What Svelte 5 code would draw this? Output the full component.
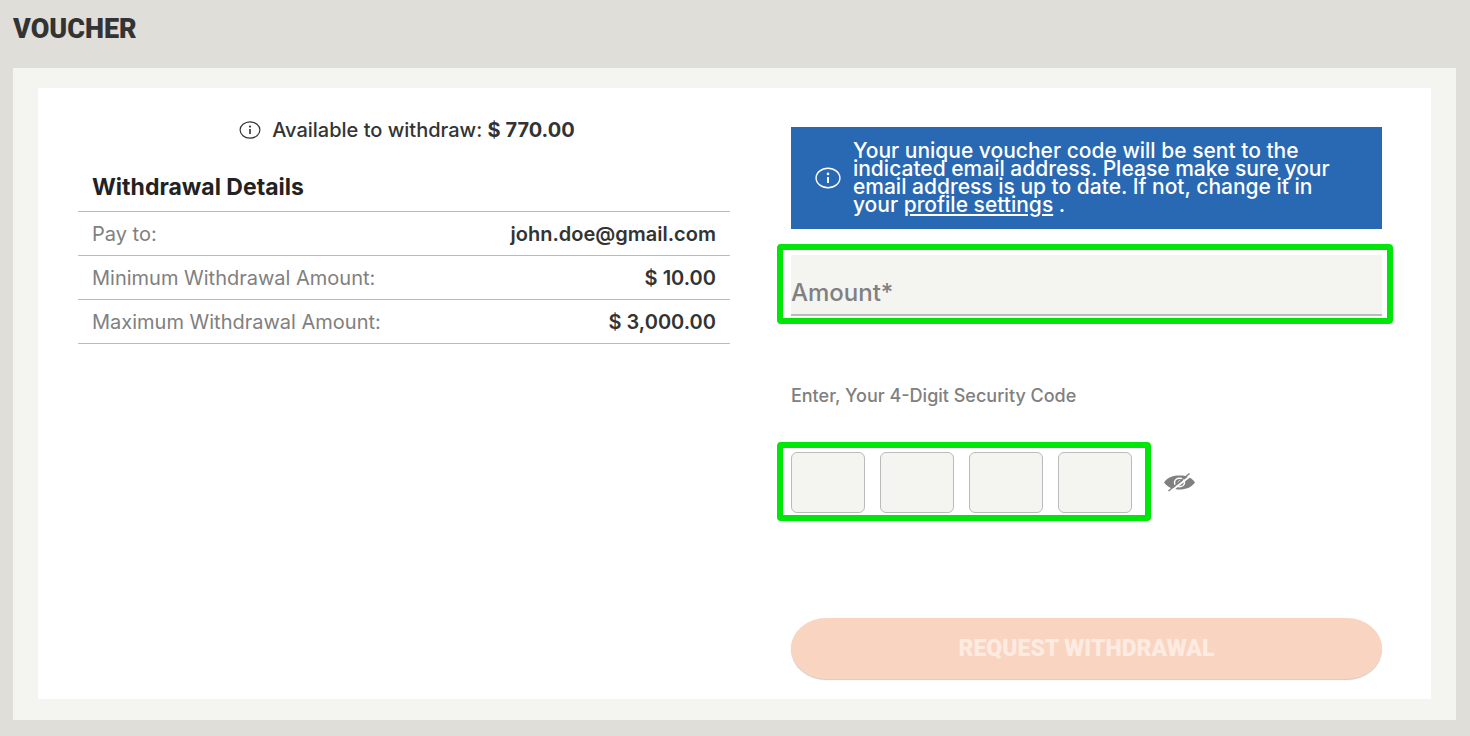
<script lang="ts">
  interface Detail {
    label: string
    value: string
  }

  const details: Detail[] = [
    { label: 'Pay to:', value: 'john.doe@gmail.com' },
    { label: 'Minimum Withdrawal Amount:', value: '$ 10.00' },
    { label: 'Maximum Withdrawal Amount:', value: '$ 3,000.00' },
  ]

  let amount = $state('')
  let code = $state(['', '', '', ''])
  let showCode = $state(false)

  function submit(event: SubmitEvent) {
    event.preventDefault()
  }
</script>

{#snippet infoIcon()}
  <svg class="info" viewBox="0 0 24 20" aria-hidden="true">
    <ellipse cx="12" cy="10" rx="11" ry="9" fill="none" stroke="currentColor" stroke-width="1.3" />
    <path d="M12 9v5.5" stroke="currentColor" stroke-width="1.8" />
    <circle cx="12" cy="6.2" r="1.2" fill="currentColor" />
  </svg>
{/snippet}

<main class="page">
  <h1>VOUCHER</h1>

  <div class="panel">
    <div class="card">
      <section class="summary">
        <p class="available">
          {@render infoIcon()}
          <span>Available to withdraw: <b>$ 770.00</b></span>
        </p>

        <h2>Withdrawal Details</h2>
        <table>
          <tbody>
            {#each details as detail}
              <tr>
                <th scope="row">{detail.label}</th>
                <td>{detail.value}</td>
              </tr>
            {/each}
          </tbody>
        </table>
      </section>

      <form onsubmit={submit}>
        <div class="notice">
          {@render infoIcon()}
          <p>
            Your unique voucher code will be sent to the indicated email address. Please make sure
            your email address is up to date. If not, change it in your
            <a href="#profile">profile settings</a> .
          </p>
        </div>

        <div class="highlight amount">
          <input id="amount" bind:value={amount} type="text" inputmode="decimal" required />
          {#if !amount}
            <label for="amount">Amount*</label>
          {/if}
        </div>

        <p class="code-label" id="code-label">Enter, Your 4-Digit Security Code</p>

        <div class="code-row">
          <div class="highlight code" role="group" aria-labelledby="code-label">
            {#each code as _, i}
              <input
                bind:value={code[i]}
                type={showCode ? 'text' : 'password'}
                maxlength="1"
                aria-label={`Digit ${i + 1}`}
              />
            {/each}
          </div>
          <button
            class="toggle"
            type="button"
            aria-label="Show security code"
            onclick={() => (showCode = !showCode)}
          >
            <svg viewBox="0 0 31 20" aria-hidden="true">
              <path d="M0 10.5C4 5 9 3.500 15.500 3.500S27 5 31 10.500C27 15.500 22 17.500 15.500 17.500S4 15.500 0 10.500Z" fill="#808080" />
              <ellipse cx="15.500" cy="10.500" rx="5" ry="4.300" fill="none" stroke="#fff" stroke-width="1.500" />
              <path d="M14 11C14 9.500 15 8.500 17 8.500" fill="none" stroke="#fff" />
              <path d="M6.500 19.500 27 3.500" stroke="#fff" stroke-width="2" />
              <path d="M4.500 19 25.500 1.500" stroke="#808080" stroke-width="1.500" />
            </svg>
          </button>
        </div>

        <button class="submit" type="submit">REQUEST WITHDRAWAL</button>
      </form>
    </div>
  </div>
</main>

<style>
  :global(body) {
    margin: 0;
    background: #dfded9;
  }

  .page {
    padding: 9px 14px 16px 13px;
    color: #333;
    font-family: Inter, 'Liberation Sans', sans-serif;
    font-size: 20px;
  }

  h1,
  h2,
  p {
    margin: 0;
  }

  h1 {
    margin-bottom: 19px;
    font-family: Roboto, sans-serif;
    font-size: 27px;
    font-weight: 900;
    line-height: 40px;
  }

  .panel {
    padding: 20px 25px 21px;
    background: #f4f5f0;
  }

  .card {
    display: grid;
    grid-template-columns: 1.103fr 1fr;
    gap: 61px;
    padding: 33px 49px 20px 40px;
    background: #fff;
  }

  .available {
    display: flex;
    align-items: center;
    justify-content: center;
    gap: 11px;
    padding-left: 6px;
    line-height: 18px;
    font-weight: 500;
  }

  .available .info {
    width: 22px;
    height: 18px;
  }

  b {
    font-weight: 700;
  }

  h2 {
    margin-top: 36px;
    padding: 0 14px 12px;
    border-bottom: 1px solid #bbb;
    color: #222;
    font-size: 23px;
    font-weight: 700;
    line-height: 24px;
  }

  table {
    width: 100%;
    border-collapse: collapse;
  }

  th,
  td {
    height: 43px;
    padding: 0 14px;
    border-bottom: 1px solid #bbb;
    line-height: 24px;
  }

  th {
    color: #808080;
    font-weight: 400;
    text-align: left;
  }

  td {
    font-weight: 600;
    text-align: right;
  }

  form {
    margin-top: 6px;
  }

  .notice {
    display: flex;
    align-items: center;
    gap: 12px;
    padding: 15px 50px 15px 24px;
    background: #2969b3;
    color: #fff;
    font-size: 21px;
    font-weight: 500;
    line-height: 18px;
  }

  .notice .info {
    flex: none;
    width: 26px;
    height: 22px;
  }

  .notice a {
    color: inherit;
    text-underline-offset: 2px;
  }

  .highlight {
    border: 6px solid #00e60b;
    border-radius: 4px;
  }

  .highlight input {
    box-sizing: border-box;
    height: 61px;
    background: #f4f4f1;
    color: #333;
    font: inherit;
  }

  .amount {
    position: relative;
    margin: 15px -11px 0 -14px;
    padding: 5px 5px 2px 8px;
    font-size: 24px;
  }

  .amount input {
    display: block;
    width: 100%;
    padding: 14px 0 0;
    border: none;
    border-bottom: 2px solid #bbb;
  }

  .amount label {
    position: absolute;
    left: 8px;
    bottom: 11px;
    color: #808080;
    font-weight: 500;
    line-height: 28px;
    pointer-events: none;
  }

  .code-label {
    margin-top: 60px;
    color: #808080;
    font-size: 18px;
    font-weight: 500;
    line-height: 24px;
  }

  .code-row {
    display: flex;
    align-items: center;
    gap: 13px;
    margin: 34px 0 97px -14px;
  }

  .code {
    display: flex;
    gap: 15px;
    padding: 4px 13px 2px 8px;
  }

  .code input {
    width: 74px;
    border: 1px solid #bbb;
    border-radius: 6px;
    text-align: center;
  }

  .toggle {
    padding: 0;
    border: none;
    background: none;
    cursor: pointer;
  }

  .toggle svg {
    display: block;
    width: 31px;
    height: 20px;
  }

  .submit {
    width: 100%;
    padding: 0;
    border: none;
    border-radius: 36px / 31px;
    background: #f9d4c1;
    box-shadow: 0 1px 1px #ccc;
    color: #fdebe1;
    font-family: Roboto, sans-serif;
    font-size: 23px;
    font-weight: 900;
    line-height: 61px;
    cursor: pointer;
  }
</style>
